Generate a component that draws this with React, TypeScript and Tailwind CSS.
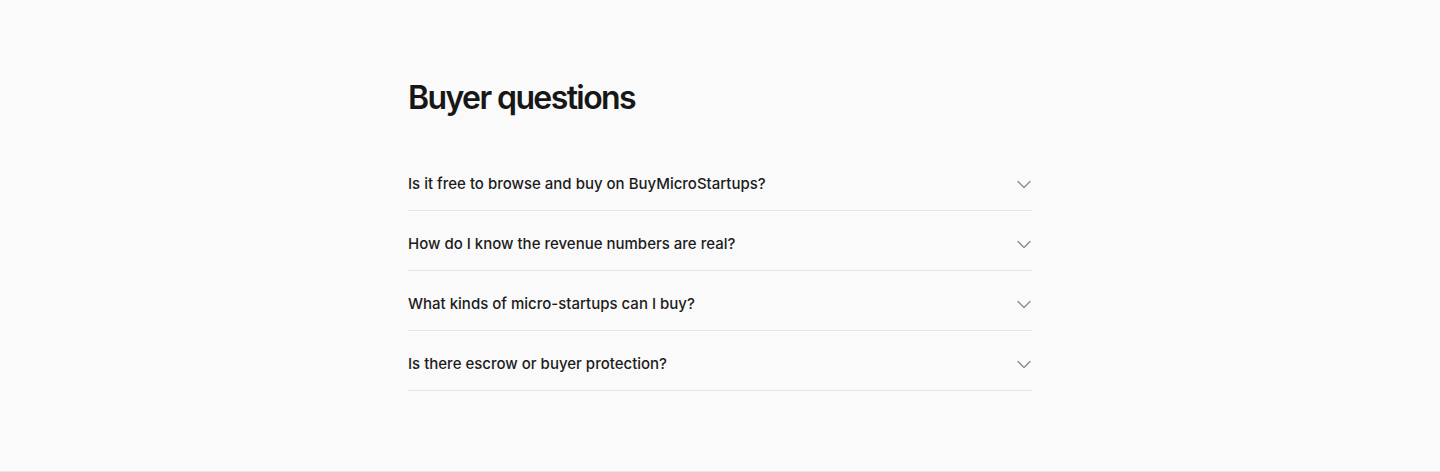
const questions = [
  'Is it free to browse and buy on BuyMicroStartups?',
  'How do I know the revenue numbers are real?',
  'What kinds of micro-startups can I buy?',
  'Is there escrow or buyer protection?',
];

function Chevron() {
  return (
    <svg viewBox="0 0 16 16" className="h-4 w-4 shrink-0 text-[#8c8c8c]" fill="none">
      <path d="M2 5.5l6 6 6-6" stroke="currentColor" strokeWidth={1.4} strokeLinecap="round" strokeLinejoin="round" />
    </svg>
  );
}

function FaqRow({ question }: { question: string }) {
  return (
    <div className="border-b border-[#e5e5e5]">
      <button
        type="button"
        className="flex w-full items-center justify-between pt-[22px] pb-[16px] text-left text-[15px] leading-[21px] font-medium text-[#1c1c1c]"
      >
        <span>{question}</span>
        <Chevron />
      </button>
    </div>
  );
}

export default function App() {
  return (
    <section
      className="min-h-[472px] border-b border-[#e5e5e5] bg-[#fafafa] pt-[78px] pb-[80px]"
      style={{ fontFamily: 'Inter, "Open Sans", sans-serif' }}
    >
      <div className="mx-auto w-[624px]">
        <h2 className="mb-[33px] text-[32px] leading-[40px] font-semibold tracking-[-0.05em] text-[#171717]">
          Buyer questions
        </h2>
        <div>
          {questions.map((q) => (
            <FaqRow key={q} question={q} />
          ))}
        </div>
      </div>
    </section>
  );
}
